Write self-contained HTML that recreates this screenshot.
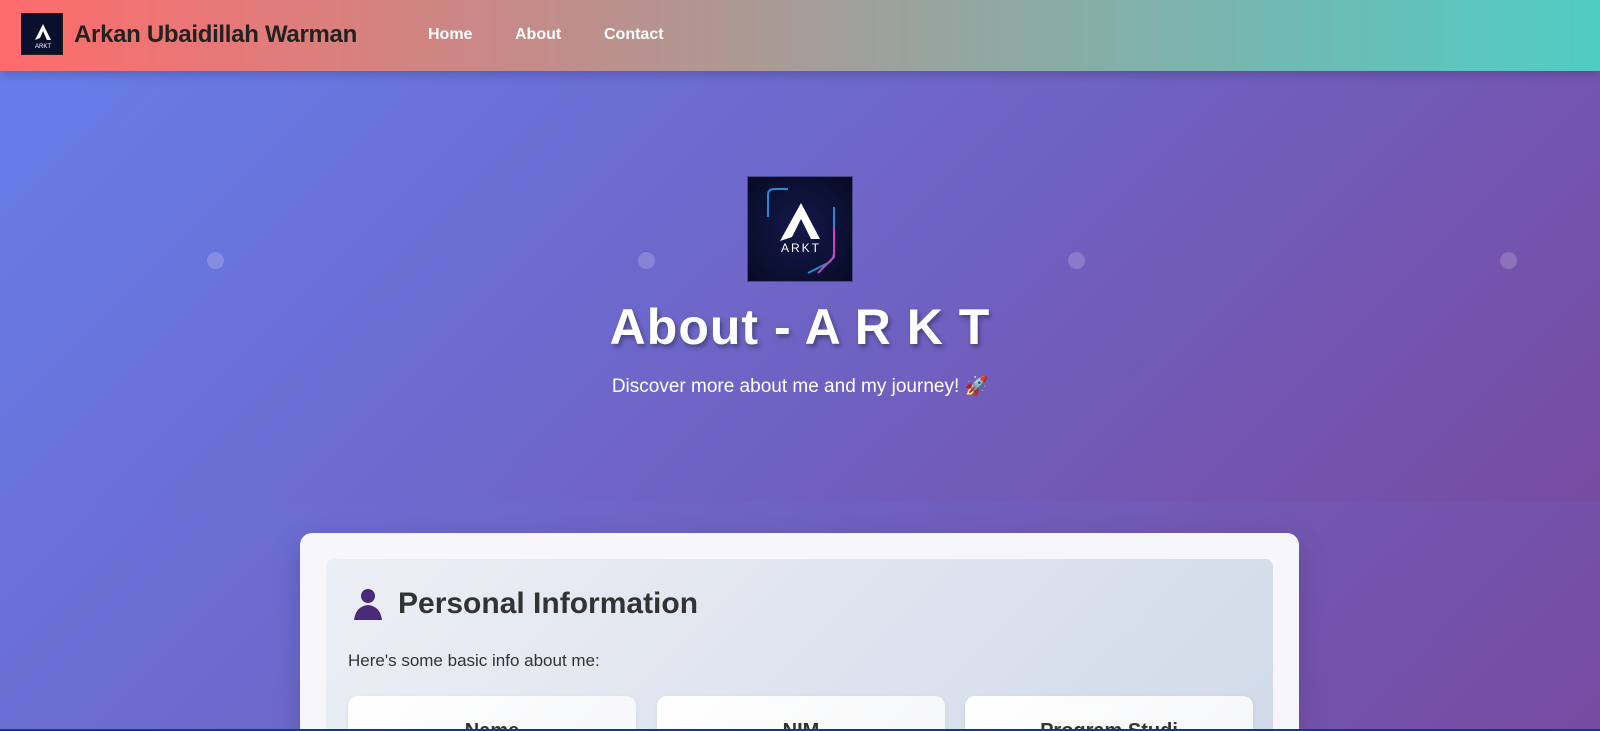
<!DOCTYPE html>
<html style="width:1600px;height:731px;overflow:hidden"><head><meta charset="utf-8"><style>
*{margin:0;padding:0;box-sizing:border-box}
body{width:1600px;height:731px;overflow:hidden;font-family:"Liberation Sans",sans-serif;background:linear-gradient(135deg,#667eea,#764ba2);position:relative}
.wrap{position:absolute;left:0;top:0;width:1600px;height:731px;overflow:hidden}
nav{position:absolute;top:0;left:0;width:1600px;height:71px;background:linear-gradient(90deg,#ff6b6b,#4ecdc4);box-shadow:0 3px 10px rgba(0,0,0,.2);z-index:5}
.logo{position:absolute;left:21px;top:13px;width:42px;height:42px;background:#0b0f2e;border:1px solid #222}
.brand{position:absolute;left:74px;top:21px;font-size:24px;font-weight:bold;color:#222;letter-spacing:-.3px}
.links a{position:absolute;top:26px;font-size:16px;font-weight:bold;color:#fff;text-decoration:none}
.hero{position:absolute;top:71px;left:0;width:1600px;height:431px;background:linear-gradient(135deg,#667eea,#764ba2)}
.dot{position:absolute;width:17px;height:17px;border-radius:50%;background:rgba(255,255,255,.18)}
.big{position:absolute;left:747px;top:176px;width:106px;height:106px;background:radial-gradient(circle at 50% 50%,#14194a,#070a24);border:1px solid #4a4a8a;overflow:hidden}
h1{position:absolute;top:298px;width:1600px;text-align:center;font-size:50px;color:#fff;text-shadow:2px 3px 5px rgba(0,0,0,.35);letter-spacing:1px}
.sub{position:absolute;top:374px;width:1600px;text-align:center;font-size:19px;color:#fff}
.card{position:absolute;left:300px;top:533px;width:999px;height:198px;border-radius:12px 12px 0 0;background:#f6f6fb;box-shadow:0 10px 30px rgba(0,0,0,.15);overflow:hidden}
.panel{position:absolute;left:26px;top:26px;width:947px;height:240px;border-radius:8px;background:linear-gradient(135deg,#eceff5,#d0d9e8)}
.panel h2{position:absolute;left:72px;top:28px;font-size:30px;color:#333}
.panel p{position:absolute;left:22px;top:92px;font-size:17px;color:#333}
.mini{position:absolute;top:137px;width:288px;height:90px;border-radius:10px;background:linear-gradient(135deg,#fff,#f5f6f8);box-shadow:0 2px 6px rgba(0,0,0,.06);text-align:center;padding-top:24px;font-size:20px;font-weight:bold;color:#333}
.bar{position:absolute;left:0;top:729px;width:1600px;height:2px;background:#123a80;z-index:9}
</style></head><body><div class="wrap">
<nav>
<div class="logo"><svg width="42" height="42" viewBox="0 0 42 42"><path d="M21 10 L13 26 L18 24 L21 17 L25 26 L29 26 Z" fill="#fff"/><text x="21" y="34" font-size="6" fill="#fff" text-anchor="middle" font-family="Liberation Sans">ARKT</text></svg></div>
<div class="brand">Arkan Ubaidillah Warman</div>
<div class="links"><a style="left:428px">Home</a><a style="left:515px">About</a><a style="left:604px">Contact</a></div>
</nav>
<div class="hero">
<div class="dot" style="left:207px;top:181px"></div><div class="dot" style="left:638px;top:181px"></div><div class="dot" style="left:1068px;top:181px"></div><div class="dot" style="left:1500px;top:181px"></div>
</div>
<div class="big"><svg width="106" height="106" viewBox="0 0 106 106"><path d="M20 40 V18 Q20 12 26 12 H40 M86 30 V75 Q86 82 80 86 M60 96 L80 86" stroke="#2fa8ff" stroke-width="2" fill="none" opacity=".8"/><path d="M86 50 V80 L70 96" stroke="#d040c0" stroke-width="2" fill="none"/><path d="M53 26 L32 64 L44 60 L53 42 L63 62 L72 62 Z" fill="#fff"/><text x="53" y="75" font-size="12" fill="#fff" text-anchor="middle" font-family="Liberation Sans" letter-spacing="2">ARKT</text></svg></div>
<h1>About - A R K T</h1>
<div class="sub">Discover more about me and my journey! 🚀</div>
<div class="card"><div class="panel">
<svg style="position:absolute;left:26px;top:28px" width="32" height="34" viewBox="0 0 32 34"><circle cx="16" cy="9" r="7" fill="#4b2a7a"/><path d="M2 33 Q4 19 16 18 Q28 19 30 33 Z" fill="#4b2a7a"/></svg>
<h2>Personal Information</h2>
<p>Here's some basic info about me:</p>
<div class="mini" style="left:22px">Name</div><div class="mini" style="left:331px">NIM</div><div class="mini" style="left:639px">Program Studi</div>
</div></div>
<div class="bar"></div>
</div></body></html>
